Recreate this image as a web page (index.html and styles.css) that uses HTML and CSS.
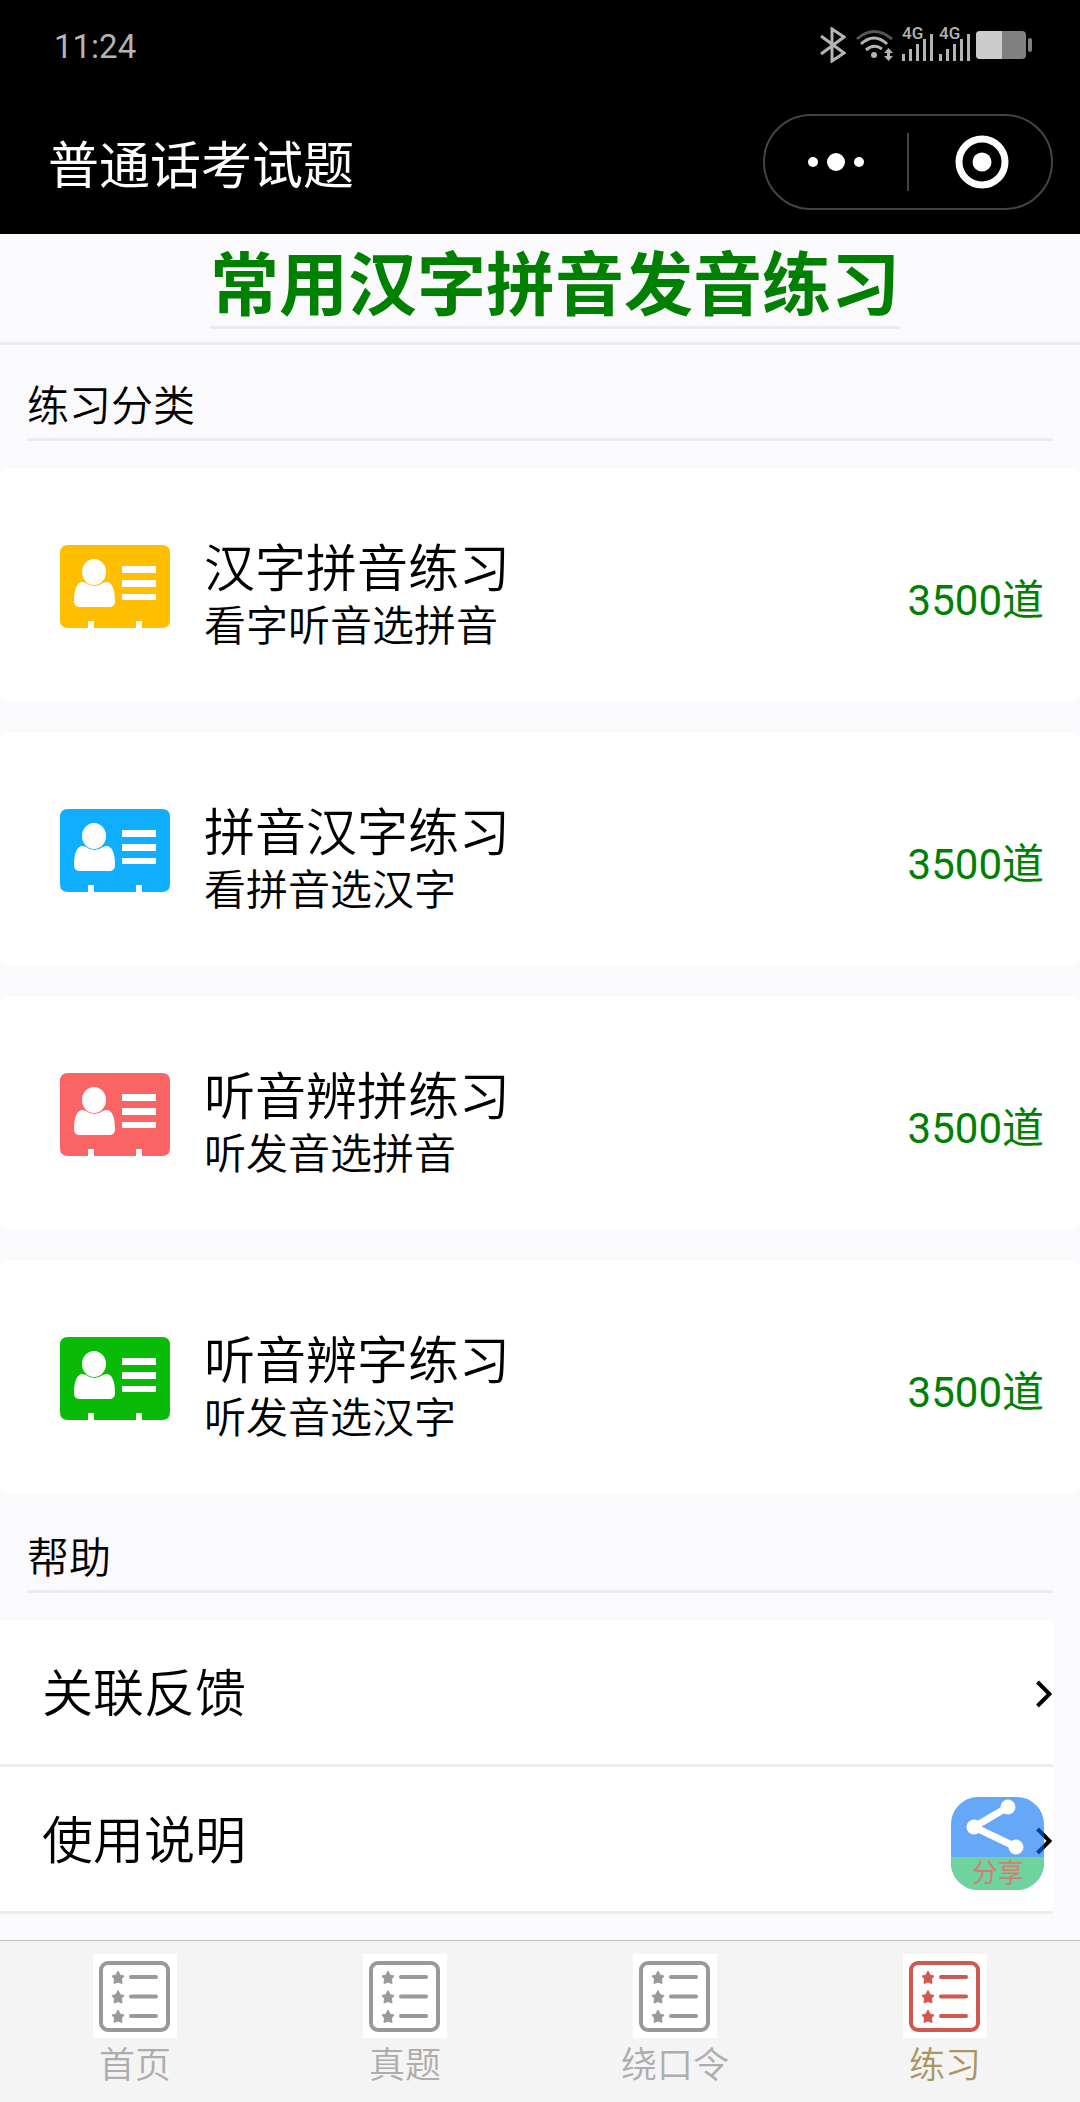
FILE: index.html
```
<!DOCTYPE html>
<html lang="zh-CN">
<head>
    <meta charset="UTF-8">
    <meta name="viewport" content="width=device-width, initial-scale=1.0">
    <title>普通话考试题</title>
    <link rel="stylesheet" href="styles.css">
</head>
<body>
    <!-- icons used more than once -->
    <svg class="sprite" aria-hidden="true">
        <symbol id="icon-card" viewBox="0 0 110 83">
            <path fill="currentColor" d="M8 0H102Q110 0 110 8V75Q110 83 102 83H82V76H76V83H34V76H28V83H8Q0 83 0 75V8Q0 0 8 0Z"/>
            <path fill="#fff" d="M21 37Q24 37 26 38Q34 44 43 38Q45 37 48 37Q55 40 55 56Q55 62 49 62H20Q14 62 14 56Q14 40 21 37Z"/>
            <ellipse fill="#fff" cx="34" cy="27" rx="12" ry="13"/>
            <path fill="#fff" d="M62 21H96V28H62ZM62 35H96V42H62ZM62 49H96V55H62Z"/>
        </symbol>
        <symbol id="icon-list" viewBox="0 0 84 84">
            <rect width="84" height="84" fill="#fff"/>
            <rect x="8" y="9" width="67" height="67" rx="7" fill="none" stroke="currentColor" stroke-width="4"/>
            <path d="M38 23H63M38 42.500H63M38 62H63" stroke="currentColor" stroke-width="4" stroke-linecap="round"/>
            <g fill="currentColor">
                <path id="star" d="M25 17L27.200 21.200L31 22L28.500 25L29 29.500L25 28L21 29.500L21.500 25L19 22L22.800 21.200Z" stroke="currentColor"/>
                <use href="#star" y="19.500"/>
                <use href="#star" y="39"/>
            </g>
        </symbol>
        <symbol id="icon-arrow" viewBox="0 0 16 28">
            <path d="M1.500 2L13.500 14L1.500 26" fill="none" stroke="currentColor" stroke-width="4"/>
        </symbol>
    </svg>

    <header class="header">
        <div class="status-bar">
            <span class="time">11:24</span>
            <div class="status-icons">
                <svg class="bluetooth" viewBox="0 0 26 36">
                    <path d="M1 9L24 26L12 34V2L24 10L1 27" fill="none" stroke="currentColor" stroke-width="3"/>
                </svg>
                <svg class="wifi" viewBox="0 0 38 36">
                    <g fill="none" stroke="currentColor" stroke-width="3">
                        <path d="M1 12Q18 -3 36 12" stroke="#555"/>
                        <path d="M5 17Q18 5 31 17M10 23Q18 16 26 22"/>
                    </g>
                    <circle cx="18" cy="28" r="3" fill="currentColor"/>
                    <path d="M32.500 21L37 26H34V29H37L32.500 34L28 29H31V26H28Z" fill="currentColor"/>
                </svg>
                <svg class="signal" viewBox="0 -6 32 48">
                    <text x="0" y="12">4G</text>
                    <path d="M1.500 27V34M8.500 22V34M15.500 17V34M22.500 12V34M29.500 7V34" stroke="currentColor" stroke-width="3"/>
                </svg>
                <svg class="signal" viewBox="0 -6 32 48">
                    <text x="0" y="12">4G</text>
                    <path d="M1.500 27V34M8.500 22V34M15.500 17V34M22.500 12V34M29.500 7V34" stroke="currentColor" stroke-width="3"/>
                </svg>
                <svg class="battery" viewBox="0 0 56 28">
                    <rect width="50" height="28" rx="4" fill="#808080"/>
                    <path d="M4 0H26V28H4Q0 28 0 24V4Q0 0 4 0Z" fill="#ccc"/>
                    <rect x="52" y="7" width="4" height="14" rx="2" fill="#808080"/>
                </svg>
            </div>
        </div>
        <div class="nav-bar">
            <span class="nav-title">普通话考试题</span>
            <div class="capsule">
                <button type="button" class="capsule-btn more" aria-label="更多">
                    <svg class="capsule-icon" viewBox="0 0 56 56">
                        <g fill="#fff">
                            <circle cx="5" cy="28" r="5"/>
                            <circle cx="28" cy="28" r="9"/>
                            <circle cx="51" cy="28" r="5"/>
                        </g>
                    </svg>
                </button>
                <button type="button" class="capsule-btn close" aria-label="关闭">
                    <svg class="capsule-icon" viewBox="0 0 56 56">
                        <circle cx="28" cy="28" r="23" fill="none" stroke="#fff" stroke-width="7"/>
                        <circle cx="28" cy="28" r="9.500" fill="#fff"/>
                    </svg>
                </button>
            </div>
        </div>
    </header>

    <main>
        <div class="banner">
            <h1>常用汉字拼音发音练习</h1>
        </div>

        <h2 class="section-title">练习分类</h2>
        <div class="cards">
            <a href="#" class="card">
                <svg class="card-icon yellow"><use href="#icon-card"/></svg>
                <div class="card-text">
                    <h3>汉字拼音练习</h3>
                    <p>看字听音选拼音</p>
                </div>
                <span class="count">3500道</span>
            </a>
            <a href="#" class="card">
                <svg class="card-icon blue"><use href="#icon-card"/></svg>
                <div class="card-text">
                    <h3>拼音汉字练习</h3>
                    <p>看拼音选汉字</p>
                </div>
                <span class="count">3500道</span>
            </a>
            <a href="#" class="card">
                <svg class="card-icon red"><use href="#icon-card"/></svg>
                <div class="card-text">
                    <h3>听音辨拼练习</h3>
                    <p>听发音选拼音</p>
                </div>
                <span class="count">3500道</span>
            </a>
            <a href="#" class="card">
                <svg class="card-icon green"><use href="#icon-card"/></svg>
                <div class="card-text">
                    <h3>听音辨字练习</h3>
                    <p>听发音选汉字</p>
                </div>
                <span class="count">3500道</span>
            </a>
        </div>

        <h2 class="section-title">帮助</h2>
        <div class="help-list">
            <a href="#" class="help-item">
                <span>关联反馈</span>
                <svg class="arrow"><use href="#icon-arrow"/></svg>
            </a>
            <a href="#" class="help-item">
                <span>使用说明</span>
                <svg class="arrow"><use href="#icon-arrow"/></svg>
            </a>
        </div>
    </main>

    <button type="button" class="share">
        <svg class="share-icon" viewBox="0 0 93 60">
            <path d="M57 10L23 30L65 50" fill="none" stroke="#fff" stroke-width="7"/>
            <g fill="#fff">
                <circle cx="57" cy="10" r="7.500"/>
                <circle cx="23" cy="30" r="7.500"/>
                <circle cx="65" cy="50" r="7.500"/>
            </g>
        </svg>
        <span class="share-label">分享</span>
    </button>

    <nav class="tab-bar">
        <a href="#" class="tab">
            <svg class="tab-icon"><use href="#icon-list"/></svg>
            <span>首页</span>
        </a>
        <a href="#" class="tab">
            <svg class="tab-icon"><use href="#icon-list"/></svg>
            <span>真题</span>
        </a>
        <a href="#" class="tab">
            <svg class="tab-icon"><use href="#icon-list"/></svg>
            <span>绕口令</span>
        </a>
        <a href="#" class="tab active">
            <svg class="tab-icon"><use href="#icon-list"/></svg>
            <span>练习</span>
        </a>
    </nav>
</body>
</html>
```
FILE: styles.css
```
* {
    box-sizing: border-box;
}

body {
    margin: 0;
    min-height: 100vh;
    padding-bottom: 162px;
    background-color: #faf9fc;
    color: #000;
    font-family: Roboto, "Noto Sans CJK SC", sans-serif;
    font-weight: 350;
}

h1, h2, h3, p {
    margin: 0;
    font-weight: 350;
}

a {
    color: inherit;
    text-decoration: none;
}

button {
    border: none;
    padding: 0;
    background: none;
    font-family: inherit;
}

.sprite {
    position: absolute;
    width: 0;
    height: 0;
}

/* header */
.header {
    background-color: #000;
    color: #fff;
}

.status-bar {
    display: flex;
    justify-content: space-between;
    align-items: center;
    height: 90px;
    padding: 0 48px 0 54px;
    color: #b4b4b4;
}

.time {
    padding-top: 2px;
    font-size: 33px;
    font-weight: 400;
}

.status-icons {
    display: flex;
    align-items: center;
    gap: 5px;
}

.bluetooth {
    width: 26px;
    height: 36px;
    margin-right: 5px;
}

.wifi {
    width: 38px;
    height: 36px;
    margin-right: 3px;
}

.signal {
    width: 32px;
    height: 48px;
}

.signal text {
    fill: currentColor;
    font-size: 17px;
    font-weight: 500;
}

.battery {
    width: 56px;
    height: 28px;
}

.nav-bar {
    display: flex;
    justify-content: space-between;
    align-items: center;
    height: 144px;
    padding: 0 27px 0 48px;
}

.nav-title {
    font-size: 51px;
    font-weight: 400;
}

.capsule {
    display: flex;
    width: 290px;
    height: 96px;
    border: 2px solid #444;
    border-radius: 48px;
}

.capsule-btn {
    display: flex;
    justify-content: center;
    align-items: center;
    position: relative;
}

.more {
    width: 142px;
}

.close {
    flex: 1;
    padding-left: 6px;
}

.close::before {
    content: "";
    position: absolute;
    left: 0;
    top: 17px;
    bottom: 17px;
    width: 2px;
    background-color: #444;
}

.capsule-icon {
    width: 56px;
    height: 56px;
}

/* page title */
.banner {
    display: flex;
    justify-content: center;
    padding: 0 0 13px 30px;
    border-bottom: 3px solid #ececf0;
}

.banner h1 {
    padding-top: 14px;
    border-bottom: 3px solid #ececf0;
    color: #008000;
    font-size: 69px;
    font-weight: 700;
    line-height: 78px;
}

.section-title {
    margin: 0 27px 27px;
    padding-top: 31px;
    border-bottom: 3px solid #ececf0;
    font-size: 42px;
    line-height: 62px;
}

/* practice cards */
.cards {
    display: flex;
    flex-direction: column;
    gap: 30px;
    padding-bottom: 3px;
}

.card {
    display: flex;
    align-items: center;
    height: 234px;
    padding: 12px 36px 0 60px;
    border-radius: 9px;
    background-color: #fff;
}

.card-icon {
    width: 110px;
    height: 83px;
    margin-bottom: 9px;
}

.yellow {
    color: #ffbe00;
}

.blue {
    color: #10aeff;
}

.red {
    color: #fa6464;
}

.green {
    color: #09bb07;
}

.card-text {
    flex: 1;
    margin: 12px 0 0 34px;
}

.card-text h3 {
    font-size: 51px;
    line-height: 60px;
}

.card-text p {
    font-size: 42px;
    line-height: 54px;
}

.count {
    margin-top: 20px;
    color: #008000;
    font-size: 42px;
    font-weight: 400;
    line-height: 54px;
}

/* help */
.help-list {
    margin-right: 27px;
}

.help-item {
    display: flex;
    justify-content: space-between;
    align-items: center;
    height: 147px;
    padding: 0 0 4px 42px;
    border-bottom: 3px solid #ececf0;
    background-color: #fff;
    font-size: 51px;
}

.arrow {
    width: 16px;
    height: 28px;
    margin: 8px 1px 0 0;
}

.share {
    position: fixed;
    right: 36px;
    bottom: 212px;
    width: 93px;
    height: 93px;
    overflow: hidden;
    border-radius: 27px;
    background-color: #006ef3;
    opacity: 0.6;
}

.share-icon {
    display: block;
    width: 93px;
    height: 60px;
}

.share-label {
    display: block;
    background-color: #0fb661;
    color: #c02010;
    font-size: 26px;
    line-height: 33px;
}

/* bottom tabs */
.tab-bar {
    display: flex;
    position: fixed;
    left: 0;
    right: 0;
    bottom: 0;
    height: 162px;
    border-top: 1px solid #c0c0c0;
    background-color: #f4f4f4;
}

.tab {
    display: flex;
    flex: 1;
    flex-direction: column;
    align-items: center;
    padding-top: 13px;
    color: #adadad;
    font-size: 36px;
    line-height: 56px;
}

.tab-icon {
    width: 84px;
    height: 84px;
    color: #999;
}

.tab.active {
    color: #ad9560;
}

.tab.active .tab-icon {
    color: #d0584e;
}
```
